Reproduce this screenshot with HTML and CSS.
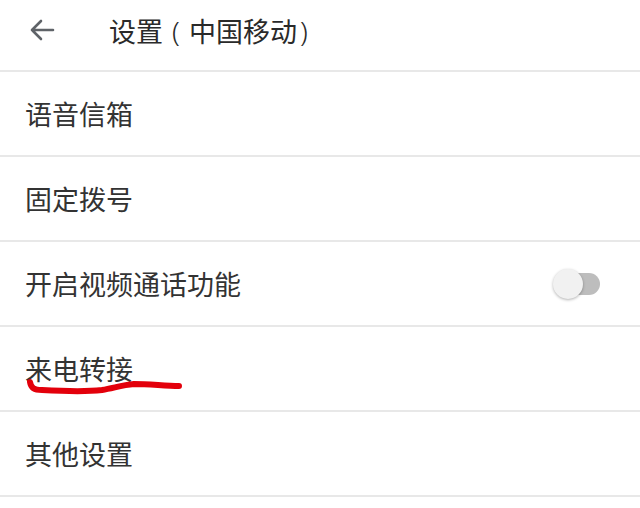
FILE: index.html
```html
<!DOCTYPE html>
<html lang="zh">
<head>
<meta charset="utf-8">
<link rel="stylesheet" href="styles.css">
</head>
<body>
<div class="page">
  <header class="bar">
    <svg class="back" width="26" height="24" viewBox="0 0 26 24">
      <path d="M24 12H3M12 3L3 12L12 21" fill="none" stroke="#5f6368" stroke-width="2.6" stroke-linecap="round" stroke-linejoin="round"/>
    </svg>
    <span class="title">设置<span class="paren open">(</span>中国移动<span class="paren close">)</span></span>
  </header>
  <div class="row"><span class="label">语音信箱</span></div>
  <div class="row"><span class="label">固定拨号</span></div>
  <div class="row">
    <span class="label">开启视频通话功能</span>
    <span class="switch"><span class="thumb"></span></span>
  </div>
  <div class="row mark">
    <span class="label">来电转接</span>
    <svg class="scribble" width="200" height="30" viewBox="0 0 200 30">
      <path d="M30 5 C31 11 34 13 42 13 C60 14 85 15 102 13 C114 11 122 8 134 7 C150 7 165 9 179 9" fill="none" stroke="#e3000b" stroke-width="6" stroke-linecap="round" stroke-linejoin="round"/>
    </svg>
  </div>
  <div class="row"><span class="label">其他设置</span></div>
</div>
</body>
</html>
```
FILE: styles.css
```css
html, body {
  margin: 0;
  padding: 0;
  background: #ffffff;
}
body {
  font-family: "Noto Sans CJK SC", "Noto Sans", sans-serif;
  color: #333333;
}
.page {
  width: 640px;
  height: 508px;
  overflow: hidden;
}
.bar {
  height: 70px;
  display: flex;
  align-items: center;
  border-bottom: 2px solid #e8e8e8;
  padding-left: 29px;
}
.back {
  flex: none;
  margin-top: -10px;
}
.title {
  margin-left: 54px;
  font-size: 27px;
  color: #2a2a2a;
  margin-top: -10px;
  white-space: nowrap;
}
.paren {
  display: inline-block;
  font-family: "Noto Sans", "DejaVu Sans", sans-serif;
  font-weight: 300;
  font-size: 28px;
}
.paren.open {
  width: 26px;
  text-align: center;
}
.paren.close {
  margin-left: 3px;
}
.row {
  position: relative;
  height: 83px;
  display: flex;
  align-items: center;
  justify-content: space-between;
  border-bottom: 2px solid #e8e8e8;
  padding: 0 40px 0 25px;
}
.label {
  font-size: 27px;
  color: #333333;
  line-height: 1;
}
.switch {
  position: relative;
  width: 46px;
  height: 22px;
  border-radius: 11px;
  background: #bdbdbd;
}
.thumb {
  position: absolute;
  left: -1px;
  top: -4px;
  width: 30px;
  height: 30px;
  border-radius: 50%;
  background: #f1f1f1;
  box-shadow: 0 1px 3px rgba(0,0,0,0.3);
}
.scribble {
  position: absolute;
  left: 0;
  top: 50px;
}
```
